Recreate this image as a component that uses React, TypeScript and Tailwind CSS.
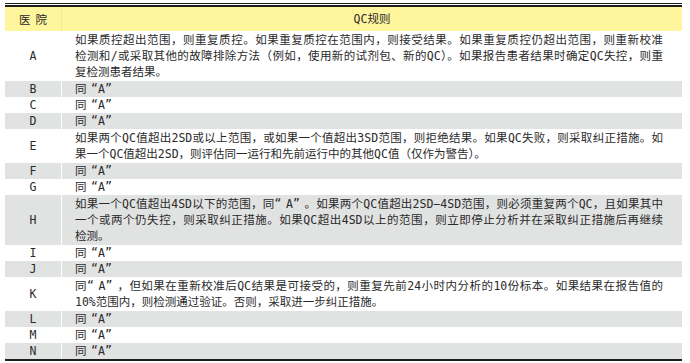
import React from "react";

type Row = {
  hospital: string;
  lines: string[];
};

const rows: Row[] = [
  {
    hospital: "A",
    lines: [
      "如果质控超出范围，则重复质控。如果重复质控在范围内，则接受结果。如果重复质控仍超出范围，则重新校准",
      "检测和/或采取其他的故障排除方法（例如，使用新的试剂包、新的QC）。如果报告患者结果时确定QC失控，则重",
      "复检测患者结果。",
    ],
  },
  { hospital: "B", lines: ["同“A”"] },
  { hospital: "C", lines: ["同“A”"] },
  { hospital: "D", lines: ["同“A”"] },
  {
    hospital: "E",
    lines: [
      "如果两个QC值超出2SD或以上范围，或如果一个值超出3SD范围，则拒绝结果。如果QC失败，则采取纠正措施。如",
      "果一个QC值超出2SD，则评估同一运行和先前运行中的其他QC值（仅作为警告）。",
    ],
  },
  { hospital: "F", lines: ["同“A”"] },
  { hospital: "G", lines: ["同“A”"] },
  {
    hospital: "H",
    lines: [
      "如果一个QC值超出4SD以下的范围，同“A”。如果两个QC值超出2SD−4SD范围，则必须重复两个QC，且如果其中",
      "一个或两个仍失控，则采取纠正措施。如果QC超出4SD以上的范围，则立即停止分析并在采取纠正措施后再继续",
      "检测。",
    ],
  },
  { hospital: "I", lines: ["同“A”"] },
  { hospital: "J", lines: ["同“A”"] },
  {
    hospital: "K",
    lines: [
      "同“A”，但如果在重新校准后QC结果是可接受的，则重复先前24小时内分析的10份标本。如果结果在报告值的",
      "10%范围内，则检测通过验证。否则，采取进一步纠正措施。",
    ],
  },
  { hospital: "L", lines: ["同“A”"] },
  { hospital: "M", lines: ["同“A”"] },
  { hospital: "N", lines: ["同“A”"] },
];

// quotes take a full-width box, as in the printed table; every line but the last is justified
const Line = ({ text, last }: { text: string; last: boolean }) => {
  const parts = text.split(/([“”])/);
  return (
    <div
      className={`h-[16px] whitespace-nowrap ${last ? "text-left" : "text-justify [text-align-last:justify]"}`}
    >
      {parts.map((p, i) =>
        p === "“" ? (
          <span key={i} className="inline-block w-[1em] text-right">
            {p}
          </span>
        ) : p === "”" ? (
          <span key={i} className="inline-block w-[1em] text-left">
            {p}
          </span>
        ) : (
          <span key={i}>{p}</span>
        )
      )}
    </div>
  );
};

const App = () => {
  return (
    <div className="min-h-screen bg-white pl-[5px] pt-[3px] font-['DejaVu_Sans_Mono','Noto_Sans_CJK_SC',monospace] text-[11.5px] leading-[16px] text-[#2a2a2a]">
      <div className="w-[677px]">
        <div className="h-[4px] border-t border-b-2 border-[#1f1f1f]" />
        <div className="grid grid-cols-[57px_1fr] bg-[#fff59c]">
          <div className="flex h-[24px] items-center justify-center border-r border-[#f3ea93] pl-[5px] font-['Noto_Sans_CJK_SC',sans-serif] tracking-[5px]">
            医院
          </div>
          <div className="flex h-[24px] items-center justify-center">QC规则</div>
        </div>
        {rows.map((row, i) => (
          <div
            key={row.hospital}
            className={`grid grid-cols-[57px_1fr] ${i % 2 === 1 ? "bg-[#e1e2e2]" : "bg-white"}`}
          >
            <div
              className={`flex items-center justify-center border-r border-white ${row.lines.length > 1 ? "py-[1px]" : ""}`}
            >
              {row.hospital}
            </div>
            <div className={`pl-[13px] pr-[19px] ${row.lines.length > 1 ? "py-[1px]" : ""}`}>
              {row.lines.map((l, j) => (
                <Line key={j} text={l} last={j === row.lines.length - 1} />
              ))}
            </div>
          </div>
        ))}
        <div className="h-[2px] bg-[#1f1f1f]" />
      </div>
    </div>
  );
};

export default App;
